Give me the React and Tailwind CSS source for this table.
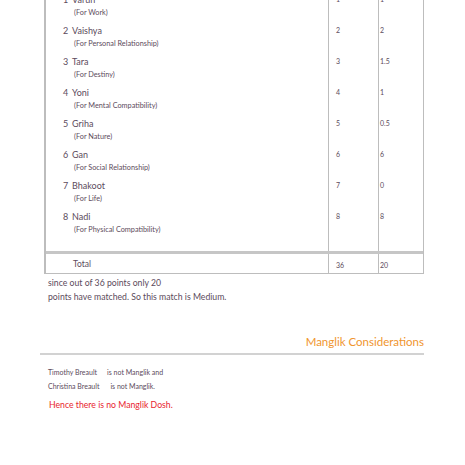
const rows = [
  { n: 1, name: "Varun", sub: "(For Work)", max: "1", got: "1" },
  { n: 2, name: "Vaishya", sub: "(For Personal Relationship)", max: "2", got: "2" },
  { n: 3, name: "Tara", sub: "(For Destiny)", max: "3", got: "1.5" },
  { n: 4, name: "Yoni", sub: "(For Mental Compatibility)", max: "4", got: "1" },
  { n: 5, name: "Griha", sub: "(For Nature)", max: "5", got: "0.5" },
  { n: 6, name: "Gan", sub: "(For Social Relationship)", max: "6", got: "6" },
  { n: 7, name: "Bhakoot", sub: "(For Life)", max: "7", got: "0" },
  { n: 8, name: "Nadi", sub: "(For Physical Compatibility)", max: "8", got: "8" },
];

export default function App() {
  return (
    <div
      className="w-[465px] h-[465px] overflow-hidden bg-white text-[#5c4b5c]"
      style={{ fontFamily: "Lato, 'Open Sans', sans-serif" }}
    >
      <div className="-mt-[20px] pl-[40px] pr-[41px]">
        <div className="ml-[4px] border-l-2 border-r border-b border-[#bdbdbd]">
          <div className="flex">
            <div className="w-[283px] pt-[12px] pb-[11px] border-r border-[#bdbdbd]">
              {rows.map((r) => (
                <div key={r.n} className="h-[31px] pl-[17px]">
                  <div className="h-[14px] flex items-center text-[9px] leading-none">
                    <span className="w-[9px]">{r.n}</span>
                    <span>{r.name}</span>
                  </div>
                  <div className="h-[13px] flex items-center pl-[11px] text-[7.3px] leading-none">
                    {r.sub}
                  </div>
                </div>
              ))}
            </div>
            <div className="w-[50px] pt-[12px] border-r border-[#bdbdbd]">
              {rows.map((r) => (
                <div key={r.n} className="h-[31px] pl-[7px]">
                  <div className="h-[14px] flex items-center text-[7px] leading-none">{r.max}</div>
                </div>
              ))}
            </div>
            <div className="flex-1 pt-[12px]">
              {rows.map((r) => (
                <div key={r.n} className="h-[31px] pl-[1px]">
                  <div className="h-[14px] flex items-center text-[7px] leading-none">{r.got}</div>
                </div>
              ))}
            </div>
          </div>
          <div className="flex h-[22px] border-t-[3px] border-[#c6c6c6]">
            <div className="w-[283px] border-r border-[#bdbdbd] flex items-end pb-[2px] pl-[27px] text-[8.5px]">
              Total
            </div>
            <div className="w-[50px] border-r border-[#bdbdbd] flex items-center pl-[7px] pt-[3px] text-[7px]">
              36
            </div>
            <div className="flex-1 flex items-center pl-[1px] pt-[4px] text-[7px]">20</div>
          </div>
        </div>

        <div className="pl-[8px] pt-[2px] text-[8.7px] leading-[14px]">
          <p>since out of 36 points only 20</p>
          <p>points have matched. So this match is Medium.</p>
        </div>

        <div className="mt-[30px] flex justify-end text-[11.5px] leading-[16px] text-[#f0952e]">
          Manglik Considerations
        </div>
        <div className="mt-[3px] border-t-2 border-[#d2d2d2]"></div>

        <div className="pl-[8px] pt-[10px] text-[7px] leading-[14px]">
          <p>
            <span>Timothy Breault</span>
            <span className="ml-[10px]">is not Manglik and</span>
          </p>
          <p>
            <span>Christina Breault</span>
            <span className="ml-[11px]">is not Manglik.</span>
          </p>
        </div>
        <p className="pl-[9px] pt-[5px] text-[8.7px] leading-[14px] text-[#e8242e]">
          Hence there is no Manglik Dosh.
        </p>
      </div>
    </div>
  );
}
